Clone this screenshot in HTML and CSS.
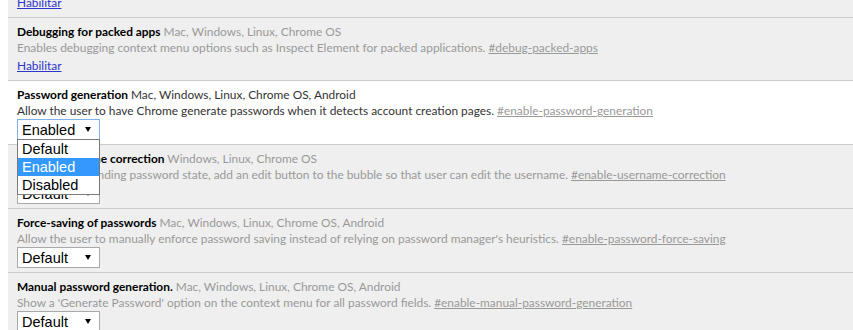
FILE: index.html
```html
<!DOCTYPE html>
<html lang="es">
<head>
<meta charset="UTF-8">
<title>chrome://flags</title>
<link rel="stylesheet" href="styles.css">
</head>
<body>
<div class="experiments">
  <div class="experiment">
    <a href="#" class="enable-link">Habilitar</a>
  </div>

  <div class="experiment">
    <div><span class="name">Debugging for packed apps</span> <span class="platforms">Mac, Windows, Linux, Chrome OS</span></div>
    <div class="desc">Enables debugging context menu options such as Inspect Element for packed applications. <a href="#" class="permalink">#debug-packed-apps</a></div>
    <a href="#" class="enable-link">Habilitar</a>
  </div>

  <div class="experiment enabled">
    <div><span class="name">Password generation</span> <span class="platforms">Mac, Windows, Linux, Chrome OS, Android</span></div>
    <div class="desc">Allow the user to have Chrome generate passwords when it detects account creation pages. <a href="#" class="permalink">#enable-password-generation</a></div>
    <div class="select focused">
      <span>Enabled</span><span class="arrow"></span>
      <ul class="options">
        <li>Default</li>
        <li class="selected">Enabled</li>
        <li>Disabled</li>
      </ul>
    </div>
  </div>

  <div class="experiment">
    <div><span class="name">Enable username correction</span> <span class="platforms">Windows, Linux, Chrome OS</span></div>
    <div class="desc">When in the pending password state, add an edit button to the bubble so that user can edit the username. <a href="#" class="permalink">#enable-username-correction</a></div>
    <div class="select"><span>Default</span><span class="arrow"></span></div>
  </div>

  <div class="experiment">
    <div><span class="name">Force-saving of passwords</span> <span class="platforms">Mac, Windows, Linux, Chrome OS, Android</span></div>
    <div class="desc">Allow the user to manually enforce password saving instead of relying on password manager's heuristics. <a href="#" class="permalink">#enable-password-force-saving</a></div>
    <div class="select"><span>Default</span><span class="arrow"></span></div>
  </div>

  <div class="experiment">
    <div><span class="name">Manual password generation.</span> <span class="platforms">Mac, Windows, Linux, Chrome OS, Android</span></div>
    <div class="desc">Show a 'Generate Password' option on the context menu for all password fields. <a href="#" class="permalink">#enable-manual-password-generation</a></div>
    <div class="select"><span>Default</span><span class="arrow"></span></div>
  </div>
</div>
</body>
</html>
```

FILE: styles.css
```css
body { margin: 0; background: #fff; font-family: Lato, "Open Sans", sans-serif; font-size: 11.9px; color: #303030; overflow: hidden; }
.experiments { margin: -7px 0 0 8px; }
.experiment { background: #efefef; border-top: 1px solid #ccc; padding: 6px 9px 4px; line-height: 16px; }
.experiment:first-child { border-top: 0; padding-top: 0; }
.experiment.enabled { background: #fff; }
.name { font-weight: bold; color: #000; }
.platforms, .desc { color: #999; }
.enabled .platforms, .enabled .desc { color: #333; }
.permalink { color: #999; text-decoration: underline; }
.enable-link { display: block; width: fit-content; margin: 2px 0; color: #2d34c9; text-decoration: underline; }

.select { position: relative; display: flex; align-items: center; justify-content: space-between; box-sizing: border-box; width: 83px; height: 21px; padding: 0 8px 0 4px; border: 1px solid #a9a9a9; background: #fff; color: #000; font: 14.5px "Liberation Sans", Arial, sans-serif; }
.select.focused { border-color: #7eb4ea; }
.arrow { width: 0; height: 0; border-left: 3px solid transparent; border-right: 3px solid transparent; border-top: 5px solid #000; }
.options { position: absolute; top: 100%; left: -1px; z-index: 2; width: 83px; box-sizing: border-box; margin: 0; padding: 0; list-style: none; border: 1px solid #7a7a7a; background: #fff; }
.options li { height: 18px; line-height: 18px; padding-left: 4px; }
.options li.selected { background: #3399ff; color: #fff; }
```
